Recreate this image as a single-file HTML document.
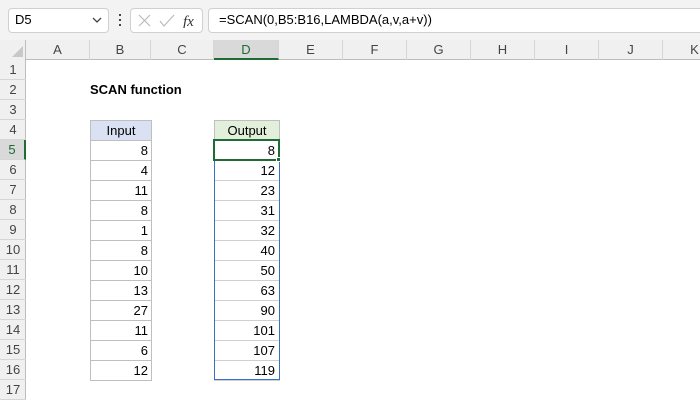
<!DOCTYPE html>
<html><head><style>
body{margin:0;width:700px;height:400px;overflow:hidden;background:#fff;font-family:"Liberation Sans",Arial,sans-serif;position:relative}
div{position:absolute;box-sizing:border-box}
.t{font-size:13px;color:#000;line-height:20px}
</style></head><body>
<div style="left:0;top:0;width:700px;height:40px;background:#f3f3f3"></div>
<div style="left:8px;top:8px;width:101px;height:25px;background:#fff;border:1px solid #d0d0d0;border-radius:4px"></div>
<div class="t" style="left:15px;top:10px;font-size:13px">D5</div>
<svg style="position:absolute;left:92px;top:17px" width="10" height="7"><path d="M1 1L5 5L9 1" stroke="#444" fill="none" stroke-width="1.3"/></svg>
<div style="left:119px;top:14px;width:2px;height:2px;background:#444"></div>
<div style="left:119px;top:19px;width:2px;height:2px;background:#444"></div>
<div style="left:119px;top:24px;width:2px;height:2px;background:#444"></div>
<div style="left:130px;top:8px;width:73px;height:25px;background:#fff;border:1px solid #d0d0d0;border-radius:4px"></div>
<svg style="position:absolute;left:138px;top:14px" width="60" height="14"><path d="M1 1L12 12M12 1L1 12" stroke="#bbb" stroke-width="1.2"/><path d="M22 7L26 12L36 1" stroke="#bbb" stroke-width="1.2" fill="none"/><text x="45" y="12" font-family="Liberation Serif" font-style="italic" font-size="15" fill="#333">fx</text></svg>
<div style="left:208px;top:8px;width:500px;height:25px;background:#fff;border:1px solid #d0d0d0;border-radius:4px"></div>
<div class="t" style="left:219px;top:10px">=SCAN(0,B5:B16,LAMBDA(a,v,a+v))</div>
<div style="left:0;top:40px;width:700px;height:20px;background:#f0f0f0;border-bottom:1px solid #bdbdbd"></div>
<div style="left:0;top:40px;width:26px;height:360px;background:#f0f0f0;border-right:1px solid #bdbdbd"></div>
<svg style="position:absolute;left:12px;top:46px" width="12" height="12"><path d="M11 0L11 11L0 11Z" fill="#c8c8c8"/></svg>
<div id="g"></div>
<script>
var h='';var cols=[['A',26,90],['B',90,151],['C',151,214],['D',214,279],['E',279,343],['F',343,407],['G',407,471],['H',471,535],['I',535,599],['J',599,663],['K',663,727]];
cols.forEach(function(c){var sel=c[0]=='D';h+='<div class="t" style="left:'+c[1]+'px;top:40px;width:'+(c[2]-c[1])+'px;height:20px;text-align:center;color:'+(sel?'#1e6b35':'#444')+';border-right:1px solid #d6d6d6;'+(sel?'background:#d9d9d9;border-bottom:2px solid #1e6b35;':'')+'">'+c[0]+'</div>';});
for(var r=1;r<=17;r++){var y=60+(r-1)*20;var sel=r==5;h+='<div class="t" style="left:0;top:'+y+'px;width:26px;height:20px;text-align:center;color:'+(sel?'#1e6b35':'#444')+';border-bottom:1px solid #d6d6d6;'+(sel?'background:#d9d9d9;border-right:2px solid #1e6b35;':'')+'">'+r+'</div>';}
h+='<div class="t" style="left:90px;top:80px;font-weight:bold">SCAN function</div>';
var inp=[8,4,11,8,1,8,10,13,27,11,6,12],out=[8,12,23,31,32,40,50,63,90,101,107,119];
h+='<div class="t" style="left:90px;top:120px;width:62px;height:21px;background:#d9e1f2;border:1px solid #bfbfbf;text-align:center">Input</div>';
h+='<div class="t" style="left:214px;top:120px;width:66px;height:21px;background:#e2efda;border:1px solid #bfbfbf;text-align:center">Output</div>';
for(var i=0;i<12;i++){var y=140+i*20;
h+='<div class="t" style="left:90px;top:'+y+'px;width:62px;height:21px;border:1px solid #bfbfbf;text-align:right;padding-right:3px">'+inp[i]+'</div>';
h+='<div class="t" style="left:214px;top:'+y+'px;width:66px;height:21px;border:1px solid #d0d0d0;text-align:right;padding-right:4px">'+out[i]+'</div>';}
h+='<div style="left:214px;top:140px;width:66px;height:240px;border:1px solid #3a6fc9"></div>';
h+='<div style="left:213px;top:139px;width:67px;height:22px;border:2px solid #1e6b35"></div>';
h+='<div style="left:276px;top:157px;width:5px;height:5px;background:#1e6b35;border:1px solid #fff"></div>';
document.getElementById('g').outerHTML=h;
</script>
</body></html>
